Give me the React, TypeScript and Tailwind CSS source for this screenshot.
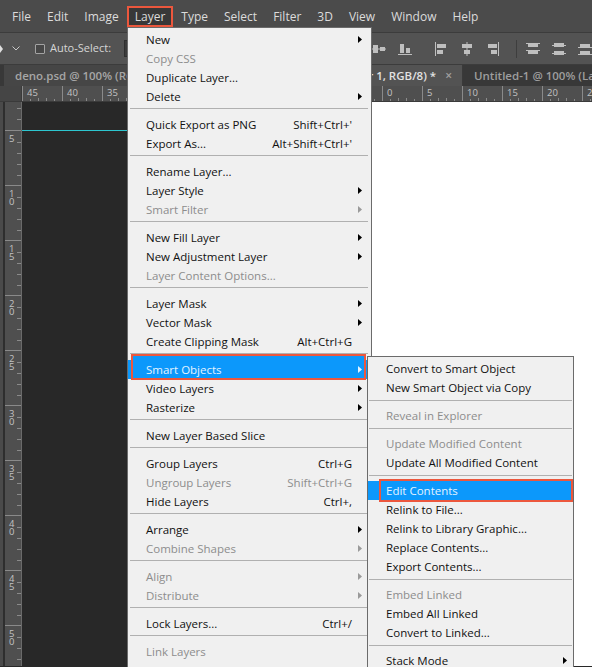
import React from "react";

type MenuItem =
  | { label: string; shortcut?: string; sub?: boolean; off?: boolean; hot?: boolean }
  | "sep";

const layerItems: MenuItem[] = [
  { label: "New", sub: true },
  { label: "Copy CSS", off: true },
  { label: "Duplicate Layer..." },
  { label: "Delete", sub: true },
  "sep",
  { label: "Quick Export as PNG", shortcut: "Shift+Ctrl+'" },
  { label: "Export As...", shortcut: "Alt+Shift+Ctrl+'" },
  "sep",
  { label: "Rename Layer..." },
  { label: "Layer Style", sub: true },
  { label: "Smart Filter", sub: true, off: true },
  "sep",
  { label: "New Fill Layer", sub: true },
  { label: "New Adjustment Layer", sub: true },
  { label: "Layer Content Options...", off: true },
  "sep",
  { label: "Layer Mask", sub: true },
  { label: "Vector Mask", sub: true },
  { label: "Create Clipping Mask", shortcut: "Alt+Ctrl+G" },
  "sep",
  { label: "Smart Objects", sub: true, hot: true },
  { label: "Video Layers", sub: true },
  { label: "Rasterize", sub: true },
  "sep",
  { label: "New Layer Based Slice" },
  "sep",
  { label: "Group Layers", shortcut: "Ctrl+G" },
  { label: "Ungroup Layers", shortcut: "Shift+Ctrl+G", off: true },
  { label: "Hide Layers", shortcut: "Ctrl+," },
  "sep",
  { label: "Arrange", sub: true },
  { label: "Combine Shapes", sub: true, off: true },
  "sep",
  { label: "Align", sub: true, off: true },
  { label: "Distribute", sub: true, off: true },
  "sep",
  { label: "Lock Layers...", shortcut: "Ctrl+/" },
  "sep",
  { label: "Link Layers", off: true },
  { label: "Select Linked Layers", off: true },
];

const smartItems: MenuItem[] = [
  { label: "Convert to Smart Object" },
  { label: "New Smart Object via Copy" },
  "sep",
  { label: "Reveal in Explorer", off: true },
  "sep",
  { label: "Update Modified Content", off: true },
  { label: "Update All Modified Content" },
  "sep",
  { label: "Edit Contents", hot: true },
  { label: "Relink to File..." },
  { label: "Relink to Library Graphic..." },
  { label: "Replace Contents..." },
  { label: "Export Contents..." },
  "sep",
  { label: "Embed Linked", off: true },
  { label: "Embed All Linked" },
  { label: "Convert to Linked..." },
  "sep",
  { label: "Stack Mode", sub: true },
];

const topMenus = ["File", "Edit", "Image", "Layer", "Type", "Select", "Filter", "3D", "View", "Window", "Help"];

function Arrow({ color }: { color: string }) {
  return (
    <svg width="4" height="7" viewBox="0 0 4 7">
      <path d="M0 0L4 3.5L0 7Z" fill={color} />
    </svg>
  );
}

function Menu({
  items,
  className,
  mark,
  sepClass,
  arrowClass,
}: {
  items: MenuItem[];
  className: string;
  mark: string;
  sepClass: string;
  arrowClass: string;
}) {
  return (
    <div className={`absolute bg-[#f0f0f0] border border-[#6b6b6b] pt-[2px] ${className}`}>
      {items.map((it, i) =>
        it === "sep" ? (
          <div key={i} className={`h-[9px] ${sepClass}`}>
            <div className="h-px bg-[#b0b0b0]" />
          </div>
        ) : (
          <div
            key={i}
            className={`relative flex items-center h-[19px] pl-[18px] text-[11.5px] whitespace-nowrap ${
              it.hot ? "bg-[#0c98fb] text-[#e4f3ff]" : it.off ? "text-[#8d8d8d]" : "text-[#111111]"
            }`}
          >
            {it.hot && <div className={`absolute border-2 border-[#ec573d] ${mark}`} />}
            <span className="relative flex-1">{it.label}</span>
            {it.shortcut && <span className="relative">{it.shortcut}</span>}
            <span className={`relative w-[16px] flex justify-center ${arrowClass}`}>
              {it.sub && <Arrow color={it.hot ? "#e4f3ff" : it.off ? "#9a9a9a" : "#000000"} />}
            </span>
          </div>
        )
      )}
    </div>
  );
}

function ToolIcon({ kind }: { kind: number }) {
  const c = "#bfbfbf";
  const shapes: React.ReactNode[][] = [
    [<rect key="a" x="0" y="6.5" width="14" height="1" />, <rect key="b" x="1" y="3" width="5" height="8" />, <rect key="c" x="8" y="5" width="5" height="4" />],
    [<rect key="a" x="2" y="2" width="4" height="9" />, <rect key="b" x="8" y="6" width="4" height="5" />, <rect key="c" x="0" y="12" width="14" height="1" />],
    [<rect key="a" x="1" y="0" width="1" height="14" />, <rect key="b" x="3" y="2" width="9" height="4" />, <rect key="c" x="3" y="8" width="6" height="4" />],
    [<rect key="a" x="6.5" y="0" width="1" height="14" />, <rect key="b" x="2" y="2" width="10" height="4" />, <rect key="c" x="4" y="8" width="6" height="4" />],
    [<rect key="a" x="12" y="0" width="1" height="14" />, <rect key="b" x="2" y="2" width="9" height="4" />, <rect key="c" x="5" y="8" width="6" height="4" />],
    [<rect key="a" x="0" y="1" width="14" height="1" />, <rect key="b" x="2" y="2" width="10" height="3" />, <rect key="c" x="0" y="8" width="14" height="1" />, <rect key="d" x="2" y="9" width="10" height="3" />],
    [<rect key="a" x="2" y="1" width="10" height="4" />, <rect key="b" x="0" y="3" width="14" height="1" />, <rect key="c" x="2" y="9" width="10" height="4" />, <rect key="d" x="0" y="11" width="14" height="1" />],
    [<rect key="a" x="2" y="2" width="10" height="3" />, <rect key="b" x="0" y="5" width="14" height="1" />, <rect key="c" x="2" y="9" width="10" height="3" />, <rect key="d" x="0" y="12" width="14" height="1" />],
  ];
  return (
    <svg width="14" height="14" viewBox="0 0 14 14" fill={c}>
      {shapes[kind]}
    </svg>
  );
}

function HRuler() {
  const labels = [45, 40, 35, 30, 25, 20, 15, 10, 5, 0, 5, 10, 15, 20, 25];
  return (
    <div className="flex h-[16px] bg-[#4f4f4f] border-b border-[#3a3a3a] overflow-hidden">
      <div className="w-[22px] shrink-0 bg-[#454545] border-r border-[#3a3a3a]" />
      {labels.map((n, i) => (
        <div key={i} className="relative w-[40px] shrink-0 border-l border-[#8a8a8a] pl-[4px] text-[9.5px] leading-[14px] text-[#c2c2c2]">
          {n}
          <svg className="absolute left-0 bottom-0" width="40" height="4" viewBox="0 0 40 4">
            {[8, 16, 24, 32].map((x) => (
              <rect key={x} x={x - 1} y={x === 16 || x === 24 ? 1 : 2} width="1" height="3" fill="#8a8a8a" />
            ))}
          </svg>
        </div>
      ))}
    </div>
  );
}

function VRuler() {
  const labels = [5, 10, 15, 20, 25, 30, 35, 40, 45, 50];
  const ticks = (
    <svg className="absolute right-0 top-0" width="4" height="55" viewBox="0 0 4 55">
      {[11, 22, 33, 44].map((y) => (
        <rect key={y} x="0" y={y} width="4" height="1" fill="#8a8a8a" />
      ))}
    </svg>
  );
  return (
    <div className="flex shrink-0 h-full">
      <div className="w-[3px] bg-[#4a4a4a]" />
      <div className="w-[2px] bg-[#2e2e2e]" />
      <div className="w-[17px] bg-[#4f4f4f] border-r border-[#6a6a6a] overflow-hidden">
        <div className="relative h-[28px]">
          <svg className="absolute right-0 top-0" width="4" height="28" viewBox="0 0 4 28">
            <rect x="0" y="6" width="4" height="1" fill="#8a8a8a" />
            <rect x="0" y="17" width="4" height="1" fill="#8a8a8a" />
          </svg>
        </div>
        {labels.map((n) => (
          <div key={n} className="relative h-[55px] shrink-0 border-t border-[#8a8a8a] pt-[4px] pl-[4px] flex flex-col text-[9.5px] leading-[8px] text-[#c2c2c2]">
            {String(n)
              .split("")
              .map((d, j) => (
                <span key={j}>{d}</span>
              ))}
            {ticks}
          </div>
        ))}
      </div>
    </div>
  );
}

export default function App() {
  return (
    <div className="relative w-[592px] h-[667px] overflow-hidden bg-[#282828] font-['Open_Sans','Noto_Sans',sans-serif] select-none">
      {/* Menu bar */}
      <div className="flex items-center h-[33px] bg-[#4b4b4b] pl-[4px] border-b border-[#3c3c3c]">
        {topMenus.map((m) => (
          <div
            key={m}
            className={`h-[21px] px-[6px] border-2 flex items-center text-[12px] text-[#dcdcdc] mt-[1px] ${
              m === "Layer" ? "border-[#ec573d] bg-[#383838]" : "border-transparent"
            }`}
          >
            {m}
          </div>
        ))}
      </div>

      {/* Options bar */}
      <div className="flex items-center h-[32px] bg-[#535353] border-b border-[#3c3c3c] overflow-hidden">
        <div className="w-[366px] shrink-0 flex items-center">
          <svg width="4" height="8" viewBox="0 0 4 8">
            <path d="M0 0L3 4L0 8Z" fill="#e0e0e0" />
          </svg>
          <svg width="8" height="5" viewBox="0 0 8 5" className="ml-[8px]">
            <path d="M0.5 0.5L4 4L7.5 0.5" stroke="#c8c8c8" fill="none" />
          </svg>
          <div className="ml-[15px] w-[10px] h-[10px] border border-[#a3a3a3] rounded-[1px] bg-[#474747]" />
          <span className="ml-[5px] text-[11px] text-[#d6d6d6]">Auto-Select:</span>
          <div className="ml-[13px] w-[80px] h-[17px] bg-[#3b3b3b] border border-[#2f2f2f] flex items-center pl-[8px]">
            <div className="w-[2px] h-[6px] bg-[#3fa0e0]" />
          </div>
        </div>
        <div className="flex items-center shrink-0">
          <div className="w-[26px] flex justify-center"><ToolIcon kind={0} /></div>
          <div className="w-[26px] flex justify-center"><ToolIcon kind={1} /></div>
          <div className="w-[10px]" />
          <div className="w-[26px] flex justify-center"><ToolIcon kind={2} /></div>
          <div className="w-[26px] flex justify-center"><ToolIcon kind={3} /></div>
          <div className="w-[26px] flex justify-center"><ToolIcon kind={4} /></div>
          <div className="w-[14px] flex justify-end pr-[3px]">
            <div className="w-px h-[18px] bg-[#3e3e3e]" />
          </div>
          <div className="w-[26px] flex justify-center"><ToolIcon kind={5} /></div>
          <div className="w-[26px] flex justify-center"><ToolIcon kind={6} /></div>
          <div className="w-[26px] flex justify-center"><ToolIcon kind={7} /></div>
        </div>
      </div>

      {/* Document tabs */}
      <div className="flex h-[21px] bg-[#383838] overflow-hidden text-[11.5px] font-semibold whitespace-nowrap">
        <div className="w-[4px] shrink-0" />
        <div className="w-[246px] shrink-0 bg-[#464646] pl-[11px] leading-[21px] text-[#a6a6a6] overflow-hidden">
          deno.psd @ 100% (RGB/8#) *
        </div>
        <div className="w-[212px] shrink-0 bg-[#535353] flex items-center justify-end pr-[10px] gap-[9px] overflow-hidden border-l border-[#3a3a3a]">
          <span className="text-[#e2e2e2]">Untitled-2 @ 100% (Layer 1, RGB/8) *</span>
          <span className="text-[#a0a0a0] text-[12px]">×</span>
        </div>
        <div className="shrink-0 pl-[11px] leading-[21px] text-[#9e9e9e] border-l border-[#3a3a3a]">
          Untitled-1 @ 100% (Layer 1, RGB/8)
        </div>
      </div>

      <HRuler />

      {/* Work area */}
      <div className="flex h-[564px]">
        <VRuler />
        <div className="w-[300px] shrink-0 bg-[#282828]">
          <div className="mt-[28px] h-px bg-[#2dc6cf]" />
        </div>
        <div className="flex-1 bg-white" />
      </div>

      <Menu
        items={layerItems}
        className="left-[127px] top-[27px] w-[245px]"
        mark="left-[3px] right-[5px] -top-[6px] -bottom-[1px] bg-[#0c98fb]"
        sepClass="pt-[2px] ml-[2px] mr-[3px]"
        arrowClass="mr-[3px]"
      />
      <Menu
        items={smartItems}
        className="left-[367px] top-[356px] w-[207px]"
        mark="left-[11px] right-0 -top-[2px] -bottom-[2px]"
        sepClass="pt-[3px] ml-[1px] mr-[1px]"
        arrowClass="mr-0"
      />
    </div>
  );
}
